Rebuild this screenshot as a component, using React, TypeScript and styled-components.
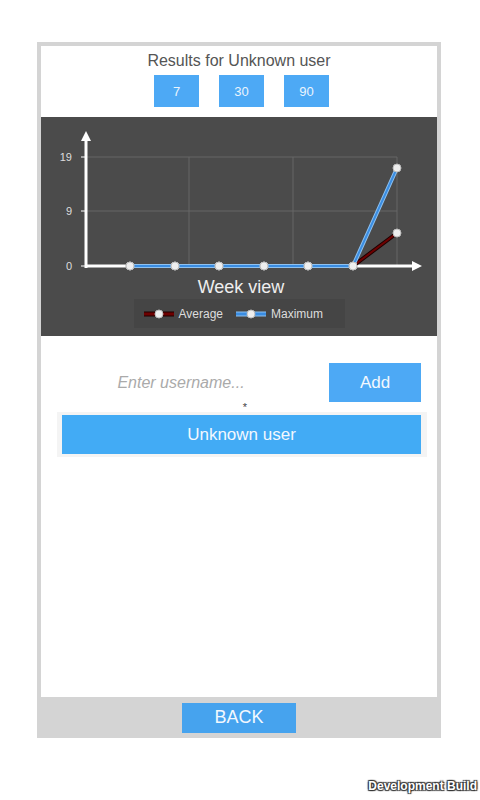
import styled, { createGlobalStyle } from 'styled-components';

const GlobalStyle = createGlobalStyle`
  html, body {
    margin: 0;
    padding: 0;
    background: #ffffff;
    font-family: 'Liberation Sans', Arial, sans-serif;
  }
`;

const days = [89, 134, 178, 223, 267, 312, 356];
const maxValues = [149, 149, 149, 149, 149, 149, 51];
const avgValues = [149, 149, 149, 149, 149, 149, 116];
const yLabels = [
  { label: '19', y: 40 },
  { label: '9', y: 94 },
  { label: '0', y: 149 },
];

const toPoints = (ys: number[]) => days.map((x, i) => `${x},${ys[i]}`).join(' ');

const App = () => {
  return (
    <>
      <GlobalStyle />
      <Page>
        <Frame>
          <Content>
            <Title>Results for Unknown user</Title>
            <RangeRow>
              <RangeButton>7</RangeButton>
              <RangeButton>30</RangeButton>
              <RangeButton>90</RangeButton>
            </RangeRow>

            <ChartPanel>
              <PlotSvg width={396} height={160} viewBox='0 0 396 160'>
                {[40, 94].map((y) => (
                  <line key={y} x1={45} x2={356} y1={y} y2={y} stroke='#666' strokeWidth={1} />
                ))}
                {[148, 252, 356].map((x) => (
                  <line key={x} x1={x} x2={x} y1={40} y2={149} stroke='#666' strokeWidth={1} />
                ))}
                {yLabels.map(({ label, y }) => (
                  <g key={label}>
                    <line x1={40} x2={45} y1={y} y2={y} stroke='#fff' strokeWidth={1} />
                    <text x={31} y={y + 4} textAnchor='end' fontSize={11} fill='#ddd'>
                      {label}
                    </text>
                  </g>
                ))}
                <line x1={45} x2={45} y1={22} y2={151} stroke='#fff' strokeWidth={3} />
                <polygon points='45,14 40,24 50,24' fill='#fff' />
                <line x1={44} x2={372} y1={149} y2={149} stroke='#fff' strokeWidth={3} />
                <polygon points='381,149 371,144 371,154' fill='#fff' />

                <polyline points={toPoints(avgValues)} fill='none' stroke='#1e0000' strokeWidth={4} />
                <polyline points={toPoints(avgValues)} fill='none' stroke='#6e0000' strokeWidth={2} />
                <polyline points={toPoints(maxValues)} fill='none' stroke='#8fc2f0' strokeWidth={4} />
                <polyline points={toPoints(maxValues)} fill='none' stroke='#3a8de2' strokeWidth={2} />

                {days.map((x, i) => (
                  <circle key={`a${x}`} cx={x} cy={avgValues[i]} r={4} fill='#eee' stroke='#bbb' strokeWidth={1} />
                ))}
                {days.map((x, i) => (
                  <circle key={`m${x}`} cx={x} cy={maxValues[i]} r={4} fill='#eee' stroke='#bbb' strokeWidth={1} />
                ))}
              </PlotSvg>
              <ChartTitle>Week view</ChartTitle>
              <Legend>
                <LegendItem>
                  <Swatch lineColor='#6e0000' edgeColor='#1e0000' />
                  Average
                </LegendItem>
                <LegendItem>
                  <Swatch lineColor='#3a8de2' edgeColor='#8fc2f0' />
                  Maximum
                </LegendItem>
              </Legend>
            </ChartPanel>

            <InputRow>
              <UsernameInput placeholder='Enter username...' />
              <AddButton>Add</AddButton>
            </InputRow>
            <Asterisk>*</Asterisk>
            <UserList>
              <UserButton>Unknown user</UserButton>
            </UserList>
          </Content>
          <Footer>
            <BackButton>BACK</BackButton>
          </Footer>
        </Frame>
        <Watermark>Development Build</Watermark>
      </Page>
    </>
  );
};

const Swatch = ({ lineColor, edgeColor }: { lineColor: string; edgeColor: string }) => (
  <SwatchSvg width={30} height={10} viewBox='0 0 30 10'>
    <line x1={0} x2={30} y1={5} y2={5} stroke={edgeColor} strokeWidth={5} />
    <line x1={0} x2={30} y1={5} y2={5} stroke={lineColor} strokeWidth={3} />
    <circle cx={15} cy={5} r={4} fill='#eee' stroke='#bbb' strokeWidth={1} />
  </SwatchSvg>
);

const Page = styled.div`
  position: relative;
  width: 480px;
  height: 800px;
  padding: 42px 0 0 37px;
  box-sizing: border-box;
`;

const Frame = styled.div`
  width: 404px;
  height: 696px;
  box-sizing: border-box;
  padding: 4px 4px 0;
  background: #d4d4d4;
  display: flex;
  flex-direction: column;
`;

const Content = styled.div`
  flex: 1;
  background: #ffffff;
  display: flex;
  flex-direction: column;
  align-items: center;
`;

const Title = styled.div`
  margin-top: 5px;
  height: 20px;
  line-height: 20px;
  font-size: 16px;
  color: #555;
`;

const RangeRow = styled.div`
  margin: 4px 0 0 5px;
  display: flex;
  gap: 20px;
`;

const RangeButton = styled.button`
  width: 45px;
  height: 32px;
  border: none;
  padding: 0;
  background: #4da9f5;
  color: #eaf4fd;
  font-family: inherit;
  font-size: 13px;
`;

const ChartPanel = styled.div`
  margin-top: 10px;
  width: 396px;
  height: 219px;
  background: #4b4b4b;
  display: flex;
  flex-direction: column;
  align-items: center;
`;

const PlotSvg = styled.svg`
  display: block;
  font-family: 'Liberation Sans', Arial, sans-serif;
`;

const ChartTitle = styled.div`
  height: 20px;
  line-height: 20px;
  margin-left: 4px;
  font-size: 18px;
  color: #eee;
`;

const Legend = styled.div`
  margin-top: 2px;
  width: 211px;
  height: 29px;
  box-sizing: border-box;
  padding-left: 10px;
  background: #454545;
  display: flex;
  align-items: center;
  gap: 13px;
`;

const LegendItem = styled.div`
  display: flex;
  align-items: center;
  gap: 5px;
  font-size: 12px;
  color: #ddd;
`;

const SwatchSvg = styled.svg`
  display: block;
`;

const InputRow = styled.div`
  margin-top: 26px;
  width: 100%;
  box-sizing: border-box;
  padding: 0 16px 0 21px;
  display: flex;
  align-items: center;
  gap: 29px;
`;

const UsernameInput = styled.input`
  flex: 1;
  height: 39px;
  border: none;
  outline: none;
  background: transparent;
  text-align: center;
  font-family: inherit;
  font-size: 16px;
  font-style: italic;
  color: #444;

  &::placeholder {
    color: #aaa;
  }
`;

const AddButton = styled.button`
  width: 92px;
  height: 39px;
  border: none;
  padding: 0;
  background: #4da9f5;
  color: #f2f8fe;
  font-family: inherit;
  font-size: 17px;
`;

const Asterisk = styled.div`
  height: 9px;
  line-height: 8px;
  font-size: 11px;
  color: #444;
  margin-left: 12px;
`;

const UserList = styled.div`
  margin: 0 10px 0 16px;
  align-self: stretch;
  background: #f4f4f4;
  padding: 3px 6px 3px 5px;
`;

const UserButton = styled.button`
  display: block;
  width: 100%;
  height: 39px;
  border: none;
  padding: 0;
  background: #42abf5;
  color: #f2f8fe;
  font-family: inherit;
  font-size: 17px;
`;

const Footer = styled.div`
  height: 41px;
  display: flex;
  justify-content: center;
  align-items: center;
`;

const BackButton = styled.button`
  width: 114px;
  height: 30px;
  border: none;
  padding: 0;
  background: #46a3ee;
  color: #f2f8fe;
  font-family: inherit;
  font-size: 18px;
`;

const Watermark = styled.div`
  position: absolute;
  right: 3px;
  top: 779px;
  font-size: 12px;
  font-weight: bold;
  color: #fff;
  text-shadow: 1px 1px 1px #333, -1px -1px 1px #333, 1px -1px 1px #333, -1px 1px 1px #333;
`;

export default App;
